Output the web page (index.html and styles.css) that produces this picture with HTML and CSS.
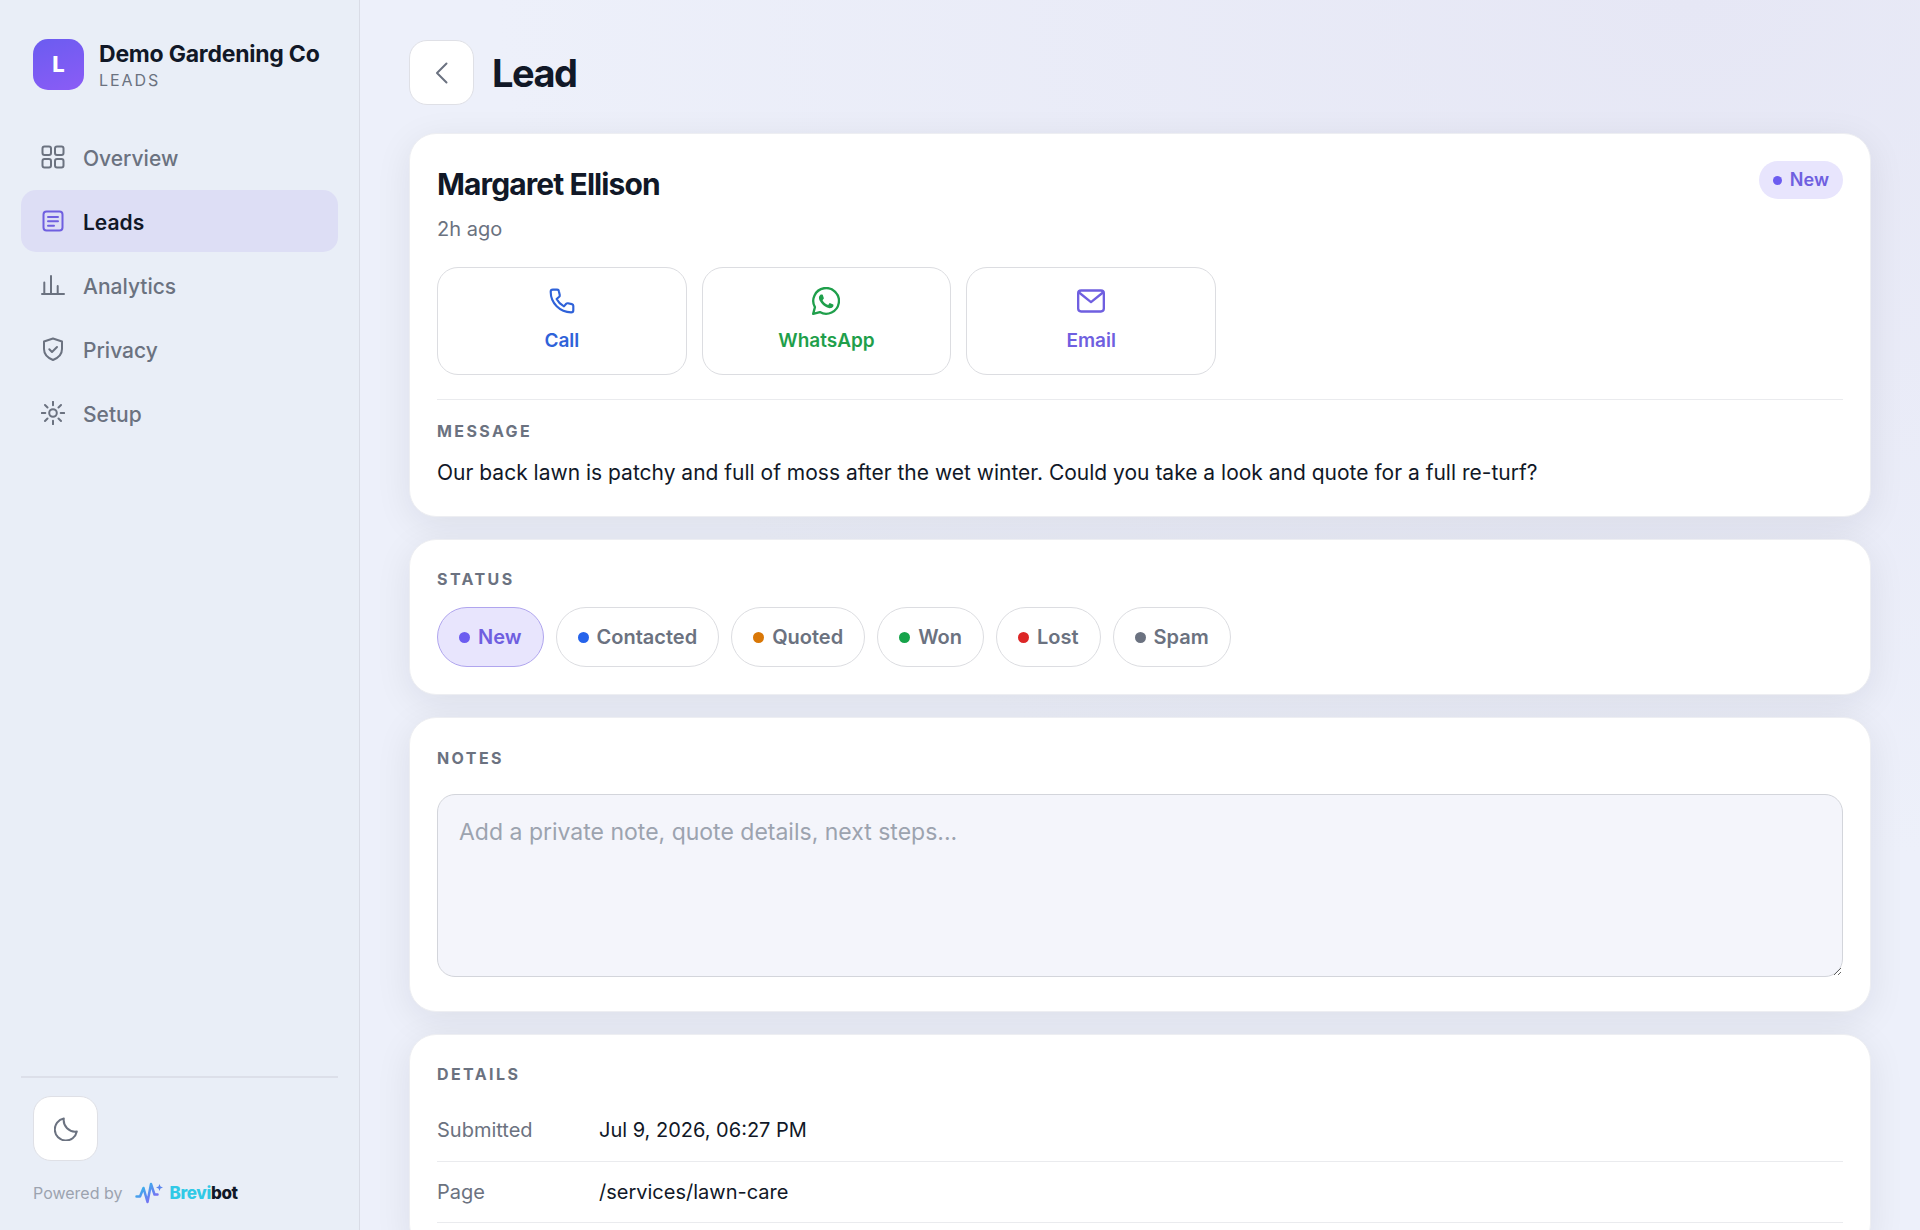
FILE: index.html
```html
<!DOCTYPE html>
<html lang="en">
<head>
    <meta charset="UTF-8">
    <meta name="viewport" content="width=device-width, initial-scale=1">
    <title>Lead - Demo Gardening Co</title>
    <link rel="stylesheet" href="styles.css">
</head>
<body>
    <div class="app">
        <aside class="sidebar">
            <div class="brand">
                <div class="brand-logo">L</div>
                <div class="brand-text">
                    <div class="brand-name">Demo Gardening Co</div>
                    <div class="brand-sub">LEADS</div>
                </div>
            </div>

            <nav class="nav">
                <a class="nav-item" href="#overview">
                    <svg class="icon" viewBox="0 0 24 24"><rect x="1.500" y="1.500" width="8.500" height="8.500" rx="2"/><rect x="14" y="1.500" width="8.500" height="8.500" rx="2"/><rect x="1.500" y="14" width="8.500" height="8.500" rx="2"/><rect x="14" y="14" width="8.500" height="8.500" rx="2"/></svg>
                    <span>Overview</span>
                </a>
                <a class="nav-item active" href="#leads">
                    <svg class="icon" viewBox="0 0 24 24"><rect x="2.500" y="2.500" width="19" height="19" rx="3"/><path d="M7 8h10M7 12.300h10M7 16.800h6"/></svg>
                    <span>Leads</span>
                </a>
                <a class="nav-item" href="#analytics">
                    <svg class="icon" viewBox="0 0 24 24"><path d="M1 21h22M3.300 21V9.500M10 21V3M16.700 21V13"/></svg>
                    <span>Analytics</span>
                </a>
                <a class="nav-item" href="#privacy">
                    <svg class="icon" viewBox="0 0 24 24"><path d="M12 1.500l9 3v7.500c0 5.500-4 9-9 11-5-2-9-5.500-9-11V4.500z"/><path d="M8.300 12.300l2.700 2.700 5-5"/></svg>
                    <span>Privacy</span>
                </a>
                <a class="nav-item" href="#setup">
                    <svg class="icon" viewBox="0 0 24 24"><circle cx="12" cy="12" r="3.800"/><path d="M12 .8v3.500M12 19.700v3.500M.8 12h3.500M19.700 12h3.500M4 4l2.500 2.500M17.500 17.500L20 20M4 20l2.500-2.500M17.500 6.500L20 4"/></svg>
                    <span>Setup</span>
                </a>
            </nav>

            <div class="sidebar-foot">
                <button class="icon-btn" type="button" aria-label="Toggle theme">
                    <svg class="icon" viewBox="0 0 24 24"><path d="M9.800 1.500A11.100 11.100 0 1 0 22.800 14.500 11.500 11.500 0 0 1 9.800 1.500z"/></svg>
                </button>
                <div class="powered">
                    <span>Powered by</span>
                    <a class="powered-link" href="#brevibot">
                        <svg class="powered-mark" viewBox="0 0 28 22">
                            <defs>
                                <linearGradient id="pulse" x1="0" y1="0" x2="1" y2="1">
                                    <stop offset="0" stop-color="#22c7e8"/>
                                    <stop offset="1" stop-color="#8b5cf6"/>
                                </linearGradient>
                            </defs>
                            <path d="M1.500 14.500h3.500L8.500 6l4 14L16 2l3.500 10.500h3" fill="none" stroke="url(#pulse)" stroke-width="2.500" stroke-linecap="round" stroke-linejoin="round"/>
                            <path d="M24.500 2l1 2.600 2.500.9-2.500.9-1 2.600-1-2.600-2.500-.9 2.500-.9z" fill="#5b86ee"/>
                        </svg>
                        <span class="powered-name"><span class="cyan">Brevi</span>bot</span>
                    </a>
                </div>
            </div>
        </aside>

        <main class="main">
            <header class="page-head">
                <button class="icon-btn" type="button" aria-label="Back">
                    <svg class="icon" viewBox="0 0 24 24"><path d="M16.500 2.500L7 12l9.500 9.500"/></svg>
                </button>
                <h1>Lead</h1>
            </header>

            <section class="card">
                <div class="lead-head">
                    <div>
                        <h2 class="lead-name">Margaret Ellison</h2>
                        <div class="lead-time">2h ago</div>
                    </div>
                    <span class="badge"><span class="dot"></span>New</span>
                </div>
                <div class="actions">
                    <a class="action call" href="#call">
                        <svg class="action-icon" viewBox="-1 -1 26 26"><path d="M3.500 1.500h4c.8 0 1.500.6 1.600 1.400l.8 3.600c.1.600-.1 1.200-.5 1.600L7 10.200c1.500 2.900 3.900 5.300 6.800 6.800l2.100-2.400c.4-.4 1-.6 1.600-.5l3.600.8c.8.200 1.400.8 1.400 1.600v4c0 1.100-.9 2-2 2C10 22.500 1.500 14 1.500 3.500c0-1.100.9-2 2-2z"/></svg>
                        <span>Call</span>
                    </a>
                    <a class="action whatsapp" href="#whatsapp">
                        <svg class="action-icon" viewBox="0 0 24 24"><path d="M1 23l1.500-5.700A11 11 0 1 1 6.700 21.500z"/><path class="solid" d="M8.900 6.300c-.3-.6-.6-.6-.9-.6h-.7c-.3 0-.7.100-1 .5-.4.400-1.300 1.300-1.300 3 0 1.800 1.300 3.500 1.500 3.800.2.200 2.500 4 6.200 5.500 3 1.200 3.700.9 4.300.9.700-.1 2.100-.9 2.400-1.700.3-.8.300-1.500.2-1.700-.1-.200-.3-.3-.7-.4l-2.500-1.200c-.3-.1-.600-.2-.800.2l-1.100 1.400c-.2.300-.4.300-.8.100-.4-.2-1.500-.6-2.900-1.800-1.100-1-1.800-2.100-2-2.500-.2-.4 0-.6.200-.8l.900-1.200c.2-.300.100-.5 0-.7z" transform="translate(1.700 1.600) scale(.85)"/></svg>
                        <span>WhatsApp</span>
                    </a>
                    <a class="action email" href="#email">
                        <svg class="action-icon" viewBox="0 0 24 24"><rect x="1" y="3" width="22" height="18" rx="2.500"/><path d="M1.500 4.500L12 13 22.500 4.500"/></svg>
                        <span>Email</span>
                    </a>
                </div>
                <div class="message">
                    <h3 class="label">Message</h3>
                    <p>Our back lawn is patchy and full of moss after the wet winter. Could you take a look and quote for a full re-turf?</p>
                </div>
            </section>

            <section class="card">
                <h3 class="label">Status</h3>
                <div class="chips">
                    <button class="chip selected" type="button"><span class="dot"></span>New</button>
                    <button class="chip" type="button"><span class="dot blue"></span>Contacted</button>
                    <button class="chip" type="button"><span class="dot orange"></span>Quoted</button>
                    <button class="chip" type="button"><span class="dot green"></span>Won</button>
                    <button class="chip" type="button"><span class="dot red"></span>Lost</button>
                    <button class="chip" type="button"><span class="dot gray"></span>Spam</button>
                </div>
            </section>

            <section class="card notes">
                <label class="label" for="notes">Notes</label>
                <textarea id="notes" placeholder="Add a private note, quote details, next steps..."></textarea>
            </section>

            <section class="card">
                <h3 class="label">Details</h3>
                <table class="details">
                    <tr>
                        <th scope="row">Submitted</th>
                        <td>Jul 9, 2026, 06:27 PM</td>
                    </tr>
                    <tr>
                        <th scope="row">Page</th>
                        <td>/services/lawn-care</td>
                    </tr>
                </table>
            </section>
        </main>
    </div>
</body>
</html>
```

FILE: styles.css
```css
* {
    box-sizing: border-box;
}
body {
    margin: 0;
    font-family: Inter, "Liberation Sans", sans-serif;
    font-size: 20px;
    line-height: 24px;
    color: #111827;
    background: radial-gradient(ellipse at 88% 0, #e6e7f5 0, rgba(230, 231, 245, 0) 50%), #edf0fa;
}
h1, h2, h3, p {
    margin: 0;
}
a {
    color: inherit;
    text-decoration: none;
}
button, textarea {
    font-family: inherit;
}
button {
    cursor: pointer;
}
.app {
    display: flex;
    height: 100vh;
}
.icon {
    width: 24px;
    height: 24px;
    flex: none;
    fill: none;
    stroke: currentColor;
    stroke-width: 2;
    stroke-linecap: round;
    stroke-linejoin: round;
}

/* sidebar */
.sidebar {
    display: flex;
    flex-direction: column;
    flex: none;
    width: 360px;
    padding: 38px 21px 25px;
    background: #e9eef7;
    border-right: 1px solid #d9dce6;
}
.brand {
    display: flex;
    align-items: center;
    gap: 15px;
    padding: 0 12px;
}
.brand-logo {
    display: flex;
    align-items: center;
    justify-content: center;
    width: 51px;
    height: 51px;
    border-radius: 15px;
    background: linear-gradient(160deg, #6b5cf0, #8b5cf6);
    color: #fff;
    font-size: 22px;
    font-weight: 800;
}
.brand-name {
    font-size: 23px;
    font-weight: 700;
    line-height: 32px;
    letter-spacing: -0.01em;
    white-space: nowrap;
}
.brand-sub {
    font-size: 16px;
    line-height: 20px;
    letter-spacing: 0.12em;
    color: #6b7280;
}
.nav {
    display: flex;
    flex-direction: column;
    gap: 2px;
    margin-top: 36px;
}
.nav-item {
    display: flex;
    align-items: center;
    gap: 18px;
    height: 62px;
    padding: 0 20px;
    border-radius: 15px;
    color: #6b7280;
    font-size: 21px;
    font-weight: 500;
}
.nav-item span {
    padding-top: 3px;
}
.nav-item.active {
    background: #dddef5;
    color: #111827;
    font-weight: 600;
}
.nav-item.active .icon {
    color: #6f5fe0;
}
.sidebar-foot {
    margin-top: auto;
    padding: 18px 12px 0;
    border-top: 2px solid #dcdfe9;
}
.icon-btn {
    display: flex;
    align-items: center;
    justify-content: center;
    width: 65px;
    height: 65px;
    padding: 0;
    border: 1px solid #dfe0e6;
    border-radius: 18px;
    background: #fff;
    color: #6b7280;
}
.powered {
    display: flex;
    align-items: center;
    gap: 13px;
    margin-top: 20px;
    font-size: 16px;
    color: #9ca3af;
}
.powered-link {
    display: flex;
    align-items: center;
    gap: 6px;
}
.powered-mark {
    width: 28px;
    height: 22px;
}
.powered-name {
    font-size: 17px;
    font-weight: 800;
    letter-spacing: -0.02em;
    color: #111827;
}
.cyan {
    color: #31c9e6;
}

/* main column */
.main {
    flex: 1;
    min-width: 0;
    padding: 40px 49px 39px;
    overflow-y: auto;
    scrollbar-width: none;
}
.page-head {
    display: flex;
    align-items: center;
    gap: 18px;
    margin-bottom: 28px;
}
h1 {
    font-size: 38px;
    font-weight: 700;
    line-height: 48px;
    letter-spacing: -0.04em;
}
.card {
    margin-bottom: 22px;
    padding: 27px;
    border: 1px solid #edeef2;
    border-radius: 27px;
    background: #fff;
    box-shadow: 0 8px 36px rgba(20, 28, 34, 0.08);
}
.lead-head {
    display: flex;
    align-items: flex-start;
    justify-content: space-between;
}
.lead-name {
    font-size: 30px;
    font-weight: 700;
    line-height: 46px;
    letter-spacing: -0.03em;
}
.lead-time {
    margin-top: 10px;
    color: #6b7280;
}
.dot {
    width: 11px;
    height: 11px;
    border-radius: 50%;
    background: #6c5cf0;
}
.dot.blue { background: #2563eb; }
.dot.orange { background: #d97706; }
.dot.green { background: #16a34a; }
.dot.red { background: #dc2626; }
.dot.gray { background: #6b7280; }
.badge {
    display: flex;
    align-items: center;
    gap: 8px;
    height: 38px;
    padding: 0 14px;
    border-radius: 19px;
    background: #e8e5fd;
    color: #6f5fe0;
    font-size: 18px;
    font-weight: 600;
}
.badge .dot {
    width: 9px;
    height: 9px;
}
.actions {
    display: grid;
    grid-template-columns: repeat(3, 1fr);
    gap: 15px;
    max-width: 779px;
    margin-top: 26px;
}
.action {
    display: flex;
    flex-direction: column;
    align-items: center;
    gap: 14px;
    height: 108px;
    padding-top: 19px;
    border: 1px solid #dcdde1;
    border-radius: 21px;
    font-size: 19px;
    font-weight: 600;
}
.action-icon {
    width: 28px;
    height: 28px;
    fill: none;
    stroke: currentColor;
    stroke-width: 2;
    stroke-linecap: round;
    stroke-linejoin: round;
}
.action-icon .solid {
    fill: currentColor;
    stroke: none;
}
.call { color: #2f62d9; }
.whatsapp { color: #1f9f4b; }
.email { color: #6f5fe0; }
.message {
    margin-top: 24px;
    padding-top: 19px;
    border-top: 1px solid #eaebee;
}
.label {
    display: block;
    font-size: 16px;
    font-weight: 700;
    line-height: 24px;
    letter-spacing: 0.15em;
    text-transform: uppercase;
    color: #6b7280;
}
.message p {
    margin-top: 14px;
    font-size: 21px;
    line-height: 32px;
}
.chips {
    display: flex;
    flex-wrap: wrap;
    gap: 12px;
    margin-top: 16px;
}
.chip {
    display: flex;
    align-items: center;
    gap: 8px;
    height: 60px;
    padding: 0 21px;
    border: 1px solid #dcdde1;
    border-radius: 30px;
    background: #fff;
    color: #6b7280;
    font-size: 20px;
    font-weight: 600;
}
.chip.selected {
    border-color: #b0a5ee;
    background: #e8e5fd;
    color: #6f5fe0;
}
.notes .label {
    line-height: 26px;
}
.notes textarea {
    display: block;
    width: 100%;
    height: 183px;
    margin: 23px 0 7px;
    padding: 20px 21px;
    border: 1px solid #d3d5db;
    border-radius: 18px;
    background: #f4f5fb;
    color: #111827;
    font-size: 23px;
    line-height: 34px;
    resize: vertical;
}
.notes textarea::placeholder {
    color: #9ca3af;
}
.details {
    width: 100%;
    margin-top: 14px;
    border-collapse: collapse;
}
.details th,
.details td {
    height: 61px;
    padding: 0;
    border-bottom: 1px solid #eaebee;
    text-align: left;
    font-weight: 400;
}
.details th {
    width: 162px;
    color: #6b7280;
}
```
